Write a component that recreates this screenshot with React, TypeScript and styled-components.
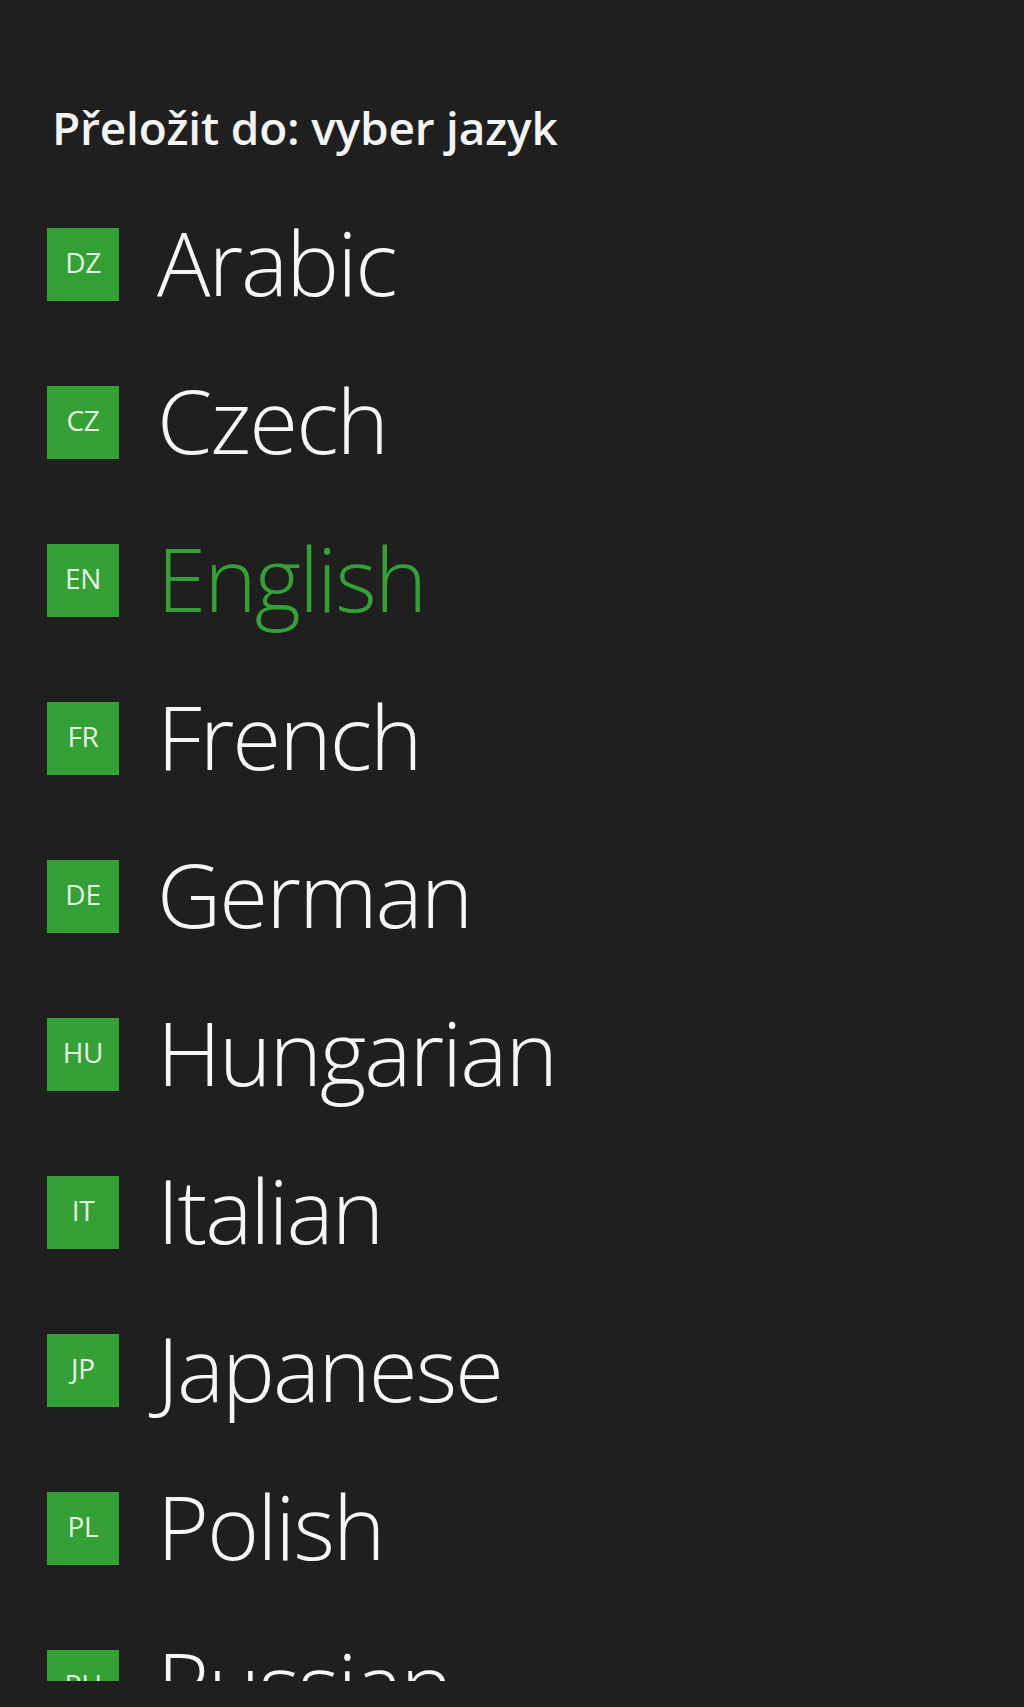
import React from "react";
import styled, { createGlobalStyle } from "styled-components";

const GlobalStyle = createGlobalStyle`
  html, body {
    margin: 0;
    padding: 0;
    background: #1f1f1f;
  }
  body {
    font-family: "Open Sans", "Noto Sans", sans-serif;
  }
`;

const Page = styled.div`
  width: 1024px;
  height: 1707px;
  background: #1f1f1f;
  box-sizing: border-box;
  padding: 101px 0 0 47px;
  overflow: hidden;
`;

const Header = styled.h1`
  margin: 0 0 75px 5px;
  font-family: "Open Sans", "Noto Sans", sans-serif;
  font-weight: 600;
  font-size: 46px;
  line-height: 52px;
  color: #f4f4f4;
  letter-spacing: -0.2px;
`;

const List = styled.ul`
  list-style: none;
  margin: 0;
  padding: 0;
  max-height: 1453px;
  overflow: hidden;
`;

const Row = styled.li`
  display: flex;
  align-items: flex-start;
  gap: 38px;
  height: 158px;
`;

const Badge = styled.div`
  flex: none;
  width: 72px;
  height: 73px;
  background: #35a035;
  display: flex;
  align-items: center;
  justify-content: center;
  font-family: "Open Sans", "Noto Sans", sans-serif;
  font-weight: 400;
  font-size: 28px;
  color: #e6f4e4;
  letter-spacing: -0.3px;
`;

const BadgeText = styled.span`
  margin-top: -5px;
`;

const Name = styled.span<{ $active?: boolean }>`
  margin-top: -3px;
  font-family: "Open Sans", "Noto Sans", sans-serif;
  font-weight: 300;
  font-size: 89px;
  line-height: 73px;
  letter-spacing: -2px;
  color: ${(p) => (p.$active ? "#35a035" : "#f6f6f6")};
  white-space: nowrap;
`;

const languages = [
  { code: "DZ", name: "Arabic" },
  { code: "CZ", name: "Czech" },
  { code: "EN", name: "English", active: true },
  { code: "FR", name: "French" },
  { code: "DE", name: "German" },
  { code: "HU", name: "Hungarian" },
  { code: "IT", name: "Italian" },
  { code: "JP", name: "Japanese" },
  { code: "PL", name: "Polish" },
  { code: "RU", name: "Russian" },
];

export default function App() {
  return (
    <>
      <GlobalStyle />
      <Page>
        <Header>Přeložit do: vyber jazyk</Header>
        <List>
          {languages.map((l) => (
            <Row key={l.code}>
              <Badge>
                <BadgeText>{l.code}</BadgeText>
              </Badge>
              <Name $active={l.active}>{l.name}</Name>
            </Row>
          ))}
        </List>
      </Page>
    </>
  );
}
